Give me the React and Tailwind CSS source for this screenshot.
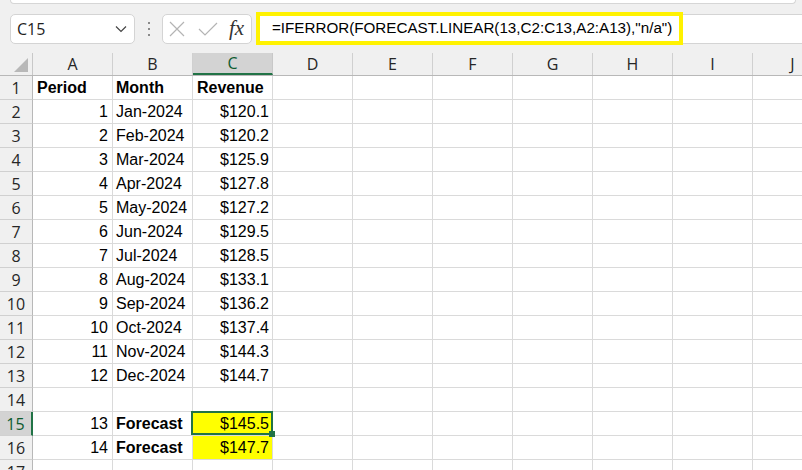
import React from 'react'

const COLS = ['A', 'B', 'C', 'D', 'E', 'F', 'G', 'H', 'I', 'J']

const rows = [
  { n: 1, a: 'Period', b: 'Month', c: 'Revenue', head: true },
  { n: 2, a: '1', b: 'Jan-2024', c: '$120.1' },
  { n: 3, a: '2', b: 'Feb-2024', c: '$120.2' },
  { n: 4, a: '3', b: 'Mar-2024', c: '$125.9' },
  { n: 5, a: '4', b: 'Apr-2024', c: '$127.8' },
  { n: 6, a: '5', b: 'May-2024', c: '$127.2' },
  { n: 7, a: '6', b: 'Jun-2024', c: '$129.5' },
  { n: 8, a: '7', b: 'Jul-2024', c: '$128.5' },
  { n: 9, a: '8', b: 'Aug-2024', c: '$133.1' },
  { n: 10, a: '9', b: 'Sep-2024', c: '$136.2' },
  { n: 11, a: '10', b: 'Oct-2024', c: '$137.4' },
  { n: 12, a: '11', b: 'Nov-2024', c: '$144.3' },
  { n: 13, a: '12', b: 'Dec-2024', c: '$144.7' },
  { n: 14 },
  { n: 15, a: '13', b: 'Forecast', c: '$145.5', bold: true, fill: true, selected: true },
  { n: 16, a: '14', b: 'Forecast', c: '$147.7', bold: true, fill: true },
  { n: 17 },
]

const headerFont = "font-['Segoe_UI','Open_Sans',sans-serif]"

function FormulaBar() {
  return (
    <div className="h-[53px] bg-[#f0f0f0] flex flex-col shrink-0">
      <div className="h-[4px] ml-[10px] mr-[6px] bg-white border-b border-x border-[#d6d6d6] rounded-b-[5px]" />
      <div className="flex items-center h-[29px] mt-[10px]">
        <div className="ml-[10px] w-[125px] h-[30px] bg-white border border-[#d4d4d4] rounded-[5px] flex items-center justify-between pl-[6px] pr-[7px]">
          <span className={`${headerFont} text-[16px] text-[#1f1f1f]`}>C15</span>
          <svg width="12" height="8" viewBox="0 0 12 8" fill="none">
            <path d="M1 1.5 L6 6.5 L11 1.5" stroke="#444" strokeWidth="1.2" />
          </svg>
        </div>
        <div className="w-[27px] flex flex-col items-center gap-[4px]">
          <span className="w-[2px] h-[2px] bg-[#8a8a8a]" />
          <span className="w-[2px] h-[2px] bg-[#8a8a8a]" />
          <span className="w-[2px] h-[2px] bg-[#8a8a8a]" />
        </div>
        <div className="w-[90px] h-[30px] bg-white border border-[#d4d4d4] rounded-[5px] flex items-center pl-[6px]">
          <svg width="16" height="16" viewBox="0 0 16 16" fill="none">
            <path d="M1 1 L15 15 M15 1 L1 15" stroke="#b4b4b4" strokeWidth="1.2" />
          </svg>
          <svg className="ml-[13px]" width="20" height="14" viewBox="0 0 20 14" fill="none">
            <path d="M1 7 L7 13 L19 1" stroke="#b4b4b4" strokeWidth="1.2" />
          </svg>
          <span className="ml-[11px] font-['Liberation_Serif',serif] italic text-[21px] leading-none text-[#333]">fx</span>
        </div>
        <div className="ml-[4px] flex-1 h-[30px] bg-white border-y border-[#d4d4d4] flex items-center">
          <div className="w-[427px] h-[33px] border-[4px] border-[#fff200] flex items-center pl-[12px] shrink-0">
            <span className="font-['Liberation_Sans',Arial,sans-serif] text-[15.2px] text-black whitespace-nowrap">
              =IFERROR(FORECAST.LINEAR(13,C2:C13,A2:A13),"n/a")
            </span>
          </div>
        </div>
      </div>
    </div>
  )
}

function HeaderRow() {
  return (
    <div className="flex h-[23px] shrink-0 bg-[#f0f0f0] border-b border-[#b8b8b8]">
      <div className="w-[33px] shrink-0 border-r border-[#c8c8c8] relative">
        <svg className="absolute left-[13px] top-[4px]" width="16" height="16" viewBox="0 0 16 16">
          <path d="M1 15 L15 15 L15 1 Z" fill="#b8b8b8" />
        </svg>
      </div>
      {COLS.map((c) => (
        <div
          key={c}
          className={
            c === 'C'
              ? `w-[80px] shrink-0 border-r border-[#c8c8c8] bg-[#d3d3d3] border-b-2 border-b-[#217346] flex items-center justify-center ${headerFont} text-[16px] text-[#0e5c2f]`
              : `w-[80px] shrink-0 border-r border-[#d0d0d0] flex items-center justify-center ${headerFont} text-[16px] text-[#262626]`
          }
        >
          {c}
        </div>
      ))}
    </div>
  )
}

function Row({ r }) {
  const txt = "font-['Liberation_Sans',Arial,sans-serif] text-[16px] text-black whitespace-nowrap"
  return (
    <div className="flex h-[24px] shrink-0">
      <div
        className={
          r.selected
            ? `w-[33px] shrink-0 bg-[#d3d3d3] border-b border-[#d0d0d0] border-r-2 border-r-[#217346] flex items-center justify-center ${headerFont} text-[16px] text-[#0e5c2f]`
            : `w-[33px] shrink-0 bg-[#f0f0f0] border-b border-[#d0d0d0] border-r border-r-[#b8b8b8] flex items-center justify-center ${headerFont} text-[16px] text-[#262626]`
        }
      >
        {r.n}
      </div>
      <div className={`w-[80px] shrink-0 border-r border-b border-[#dadada] flex items-center ${r.head ? 'justify-start pl-[4px] font-bold' : 'justify-end pr-[4px]'} ${txt}`}>
        {r.a}
      </div>
      <div className={`w-[80px] shrink-0 border-r border-b border-[#dadada] flex items-center pl-[3px] ${r.head || r.bold ? 'font-bold' : ''} ${txt}`}>
        {r.b}
      </div>
      <div
        className={`relative w-[80px] shrink-0 border-r border-b border-[#dadada] flex items-center ${r.head ? 'justify-start pl-[4px] font-bold' : 'justify-end pr-[3px]'} ${r.fill ? 'bg-[#ffff00]' : ''} ${txt}`}
      >
        {r.c}
        {r.selected && (
          <>
            <div className="absolute z-10 -top-[1px] -left-[2px] -right-[1px] bottom-0 border-2 border-[#217346]" />
            <div className="absolute z-20 -right-[3px] -bottom-[2px] w-[6px] h-[6px] bg-[#217346]" />
          </>
        )}
      </div>
      {COLS.slice(3).map((c) => (
        <div key={c} className="w-[80px] shrink-0 border-r border-b border-[#dadada]" />
      ))}
    </div>
  )
}

export default function App() {
  return (
    <div className="w-[802px] h-[470px] overflow-hidden bg-white flex flex-col">
      <FormulaBar />
      <HeaderRow />
      {rows.map((r) => (
        <Row key={r.n} r={r} />
      ))}
    </div>
  )
}
